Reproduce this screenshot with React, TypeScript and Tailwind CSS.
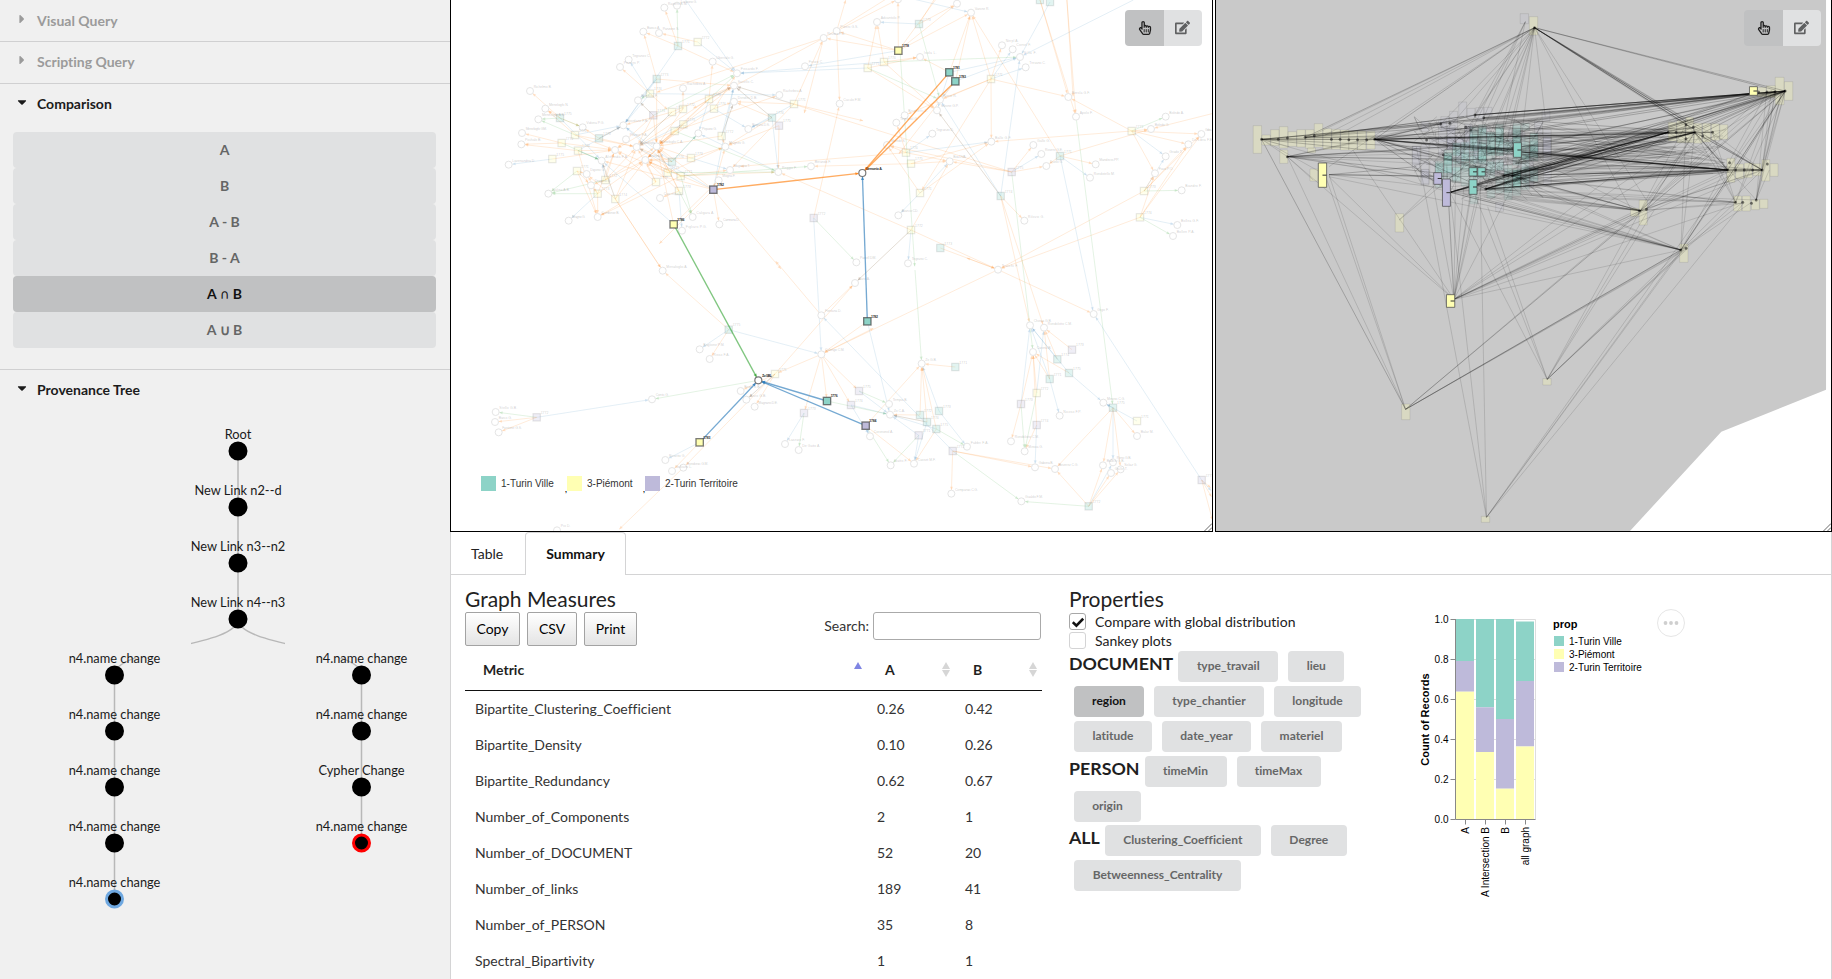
import React from "react";
import { FaEdit, FaRegHandPointer, FaCaretDown, FaCaretRight } from "react-icons/fa";

type Pt = [number, number];
type Mark = [number, number, string];
type Fan = [Pt, number[]];

const TEAL = "#8dd3c7";
const YELLOW = "#ffffb3";
const PURPLE = "#bebada";
const FILL: Record<string, string> = { t: TEAL, y: YELLOW, p: PURPLE };

/* ---------- node-link diagram data ---------- */

const people: Mark[] = [
  [643, 23, "Rapetti B.M."], [681, 17, "Lanzano G."], [580, 95, "Banco A."], [627, 99, "Panzone S."],
  [536, 179, "Tegranzo C."], [510, 201, "Pezzini P."], [240, 273, "Richelmo B."], [286, 326, "Menelogfo N."],
  [265, 358, "Menelogfo A.S."], [216, 399, "Menelogfo GM."], [214, 433, "Pochalo B."], [176, 494, "Lavenandria D."],
  [295, 581, "Galina A.B."], [356, 662, "Magno G."], [443, 651, "Cambinse B."], [423, 556, "Dragano G."],
  [410, 522, "Digono G."], [564, 301, "Bertola F."], [788, 185, "Ubertalo G."], [699, 265, "Rachebira A."],
  [861, 220, "Fissardo F."], [852, 257, "Savello C."], [852, 305, "Dondisi D.B."], [1065, 199, "Fetizo C."],
  [988, 285, "Rachebira A."], [1169, 311, "Cuculo F.M."], [1121, 114, "Rovero P.S."], [895, 387, "Ragana D.S."],
  [745, 400, "Pepano G."], [826, 440, "Magnini G."], [840, 510, "Magnano T."], [985, 516, "Reggio F."],
  [1083, 499, "Berando F."], [806, 541, "Mogna F."], [630, 594, "Caprifina D."], [728, 651, "Caligara A."],
  [808, 673, "Camnona D."], [696, 692, "Figliaro P.G."], [638, 812, "Menafoglio A."], [398, 382, "Vidona P.G."],
  [520, 376, "Giordano F.B."], [560, 441, "Menelogfo"], [620, 439, "Menelogfo C.A."], [586, 480, "Aranzo B."],
  [495, 450, ""], [455, 482, "Alitronda F.A."], [528, 418, "Pozzio F.A."], [1344, -2, ""], [1281, 66, "Advantolo P."],
  [1521, 11, ""], [1563, 38, "Varone R."], [1410, 171, "Isola L."], [1656, 136, "Nerpl A."], [1688, 148, "Cornel F."],
  [1710, 171, "Villa F."], [1727, 202, "Trevano C."], [1470, 299, "Cerio R."], [1461, 331, "Sarone G.P."],
  [1364, 346, "Brighetti L."], [1339, 368, "Tegranol G."], [1447, 401, "Tegranzo D."], [1311, 435, "Moredo S."],
  [1624, 425, "Ballo G.F."], [1499, 484, "Boa DVA."], [1750, 435, "Gallo G."], [1774, 462, "Rovero G.E."],
  [1789, 498, "Duelo G."], [1937, 493, "Mandross PP."], [1920, 533, "Rondotello M."], [1345, 646, "Bianco CD."],
  [1219, 787, "Panell DM."], [1374, 790, "Tegrano C."], [1723, 662, "Rilovio G."], [1644, 809, "Trucchi F."],
  [1855, 291, "Berola G.F."], [1878, 350, "Apolo F."], [2147, 350, "Boledo A."], [2103, 387, "Boledo G."],
  [2147, 469, "Grado T."], [2215, 433, "Da Libra F.E."], [2254, 402, "Goba"], [2115, 520, "Fava P.O."],
  [2195, 571, "Biandro F."], [2182, 675, "Bollea G.F."], [2169, 708, "Bollen P.A."], [1160, 93, "Putero G.S."],
  [749, 1048, "Baglione P.M."], [779, 1077, "Risso F.A."], [606, 1198, "Conto G."], [137, 1236, "Stello G.B."],
  [135, 1266, "Barco G."], [146, 1297, "Fantone G.S."], [872, 1173, "Brida G.B."], [889, 1199, "Arvio G.B."],
  [914, 1220, "Magnano D.E."], [1114, 946, "Fontana D."], [1114, 1063, "Colongo C.M."], [1005, 1332, "Lazzaro F."],
  [1046, 1350, "De Gatto A."], [646, 1380, "Rosetto G."], [666, 1413, "Galvano L."], [700, 1403, "Bondonio G.M."],
  [321, 1591, "Pio D."], [1215, 849, "Zaro A."], [1931, 942, "Gigo F."], [1740, 976, "Chiesa G.B."],
  [1782, 983, "Rondolotto C.M."], [1749, 1056, "Carena B."], [1415, 1091, "Zo G.B."], [1317, 1212, "Tempia B."],
  [1320, 1244, "Zo C.A."], [1260, 1309, "Corononol A."], [1322, 1396, "Gatto F."], [1392, 1391, "Casset M.F."],
  [1551, 1340, "Fabbri F.A."], [1504, 1481, "Comparsio C.G."], [1683, 1324, "Rondolotto C.M."], [1724, 1354, "Minoia G."],
  [1829, 1247, "Nicoso F.P."], [1755, 1402, "Gabona B."], [1815, 1407, "Boverez C.G."], [1714, 1504, "Gualdo F.M."],
  [1960, 1208, "Minoso C.G."], [1959, 1396, "Balbis G.B."], [1989, 1387, "Reno G.B."], [1983, 1419, "Gallo T."],
  [2012, 1408, "Solaz G."], [2061, 1308, "Balar M."],
];

const documents: Mark[] = [
  [684, 138, "t"], [743, 126, "y"], [620, 237, "t"], [600, 281, "y"], [330, 354, "t"], [375, 405, "y"],
  [335, 429, "y"], [447, 415, "t"], [384, 452, "y"], [307, 477, "y"], [381, 513, "y"], [466, 540, "y"],
  [443, 581, "y"], [496, 597, "y"], [610, 346, "p"], [666, 336, "y"], [699, 327, "y"], [777, 297, "y"],
  [792, 326, "y"], [700, 373, "y"], [674, 393, "y"], [815, 408, "y"], [723, 474, "y"], [666, 485, "t"],
  [653, 518, "y"], [692, 528, "y"], [618, 546, "y"], [687, 573, "y"], [966, 353, "t"], [987, 377, "p"],
  [1032, 312, "y"], [1091, 654, "p"], [1407, 72, "t"], [1302, 186, "y"], [1253, 204, "y"], [1623, 237, "y"],
  [1770, 0, "t"], [1800, 6, "t"], [1368, 458, "y"], [1383, 491, "y"], [1410, 579, "y"], [1383, 690, "y"],
  [1471, 744, "t"], [1652, 588, "t"], [1685, 516, "p"], [1830, 468, "t"], [2045, 393, "y"], [2082, 573, "y"],
  [2070, 652, "y"], [836, 989, "t"], [975, 1122, "y"], [260, 1252, "p"], [1062, 1239, "p"], [1203, 1215, "p"],
  [1227, 1173, "p"], [1516, 1101, "t"], [1410, 1245, "t"], [1467, 1233, "t"], [1431, 1266, "t"], [1459, 1287, "t"],
  [1406, 1306, "p"], [1508, 1353, "p"], [1866, 1049, "p"], [1822, 1078, "t"], [1857, 1119, "t"], [1799, 1137, "t"],
  [1760, 1179, "y"], [1713, 1212, "p"], [1760, 1275, "p"], [1989, 1223, "t"], [2061, 1263, "y"], [1916, 1519, "t"],
  [2255, 1440, "p"],
];

const selectedDocs: [number, number, string, string][] = [
  [790, 569, "p", "1782"], [671, 673, "y", "1786"], [1345, 152, "y", "1778"], [1498, 217, "t", "1781"],
  [1516, 244, "t", "1783"], [1131, 1203, "t", "1776"], [749, 1327, "y", "1783"], [1252, 964, "t", "1782"],
  [1247, 1277, "p", "1784"],
];

/* Each entry is a document followed by the flat x,y list of its people. */
const orange: Fan[] = [
  [[684, 138], [580, 95, 643, 23, 861, 220]], [[743, 126], [627, 99]], [[620, 237], [580, 95, 852, 257, 620, 439]],
  [[600, 281], [510, 201, 660, 336]], [[330, 354], [240, 273, 286, 326, 398, 382]], [[375, 405], [286, 326, 495, 450, 560, 441]],
  [[335, 429], [216, 399, 214, 433, 495, 450]], [[447, 415], [520, 376, 560, 441, 398, 382]],
  [[384, 452], [495, 450, 214, 433, 443, 651]], [[307, 477], [495, 450]], [[381, 513], [423, 556, 410, 522, 443, 651]],
  [[466, 540], [560, 441, 423, 556, 620, 439, 495, 450, 586, 480]], [[443, 581], [443, 651, 423, 556, 586, 480, 495, 450, 410, 522]],
  [[496, 597], [560, 441, 586, 480, 455, 482, 638, 812, 410, 522]], [[610, 346], [564, 301, 620, 439, 495, 450, 560, 441]],
  [[666, 336], [560, 441, 852, 257, 520, 376]], [[699, 327], [699, 265, 620, 439, 495, 450]],
  [[777, 297], [620, 439, 586, 480, 788, 185, 852, 257, 560, 441]], [[792, 326], [620, 439, 852, 305, 861, 220]],
  [[700, 373], [620, 439, 586, 480, 852, 257]], [[674, 393], [620, 439, 586, 480, 560, 441, 988, 285]],
  [[815, 408], [826, 440, 852, 305, 620, 439]], [[723, 474], [620, 439, 826, 440, 586, 480]],
  [[666, 485], [586, 480, 620, 439, 560, 441]], [[653, 518], [586, 480, 620, 439, 495, 450, 826, 440]],
  [[692, 528], [586, 480, 560, 441, 840, 510, 985, 516, 443, 651]], [[618, 546], [560, 441, 586, 480, 443, 651, 495, 450]],
  [[687, 573], [586, 480, 620, 439, 630, 594, 620, 439]], [[790, 569], [586, 480, 620, 439, 808, 673, 620, 739, 455, 482, 1000, 815, 826, 440]],
  [[966, 353], [826, 440, 852, 257, 852, 305]], [[987, 377], [826, 440, 985, 516]],
  [[1032, 312], [852, 305, 1121, 114, 840, 510, 1250, 365]], [[1091, 654], [1169, 311]], [[671, 673], [620, 439, 806, 541]],
  [[496, 597], [638, 812]], [[836, 989], [638, 812, 779, 1077]],
  [[1345, 152], [1344, -2, 1121, 114, 1521, 11, 1563, 38, 1160, 93, 1500, -60]], [[1407, 72], [1521, 11, 1470, -30]],
  [[1302, 186], [1281, 66, 1410, 171, 1461, 331]], [[1253, 204], [1281, 66, 1410, 171, 1461, 331]],
  [[1623, 237], [1563, 38, 1656, 136, 1624, 425, 1470, 299, 1855, 291, 1410, 579, 1364, 346]],
  [[1498, 217], [1563, 38, 1410, 171]], [[1516, 244], [1563, 38, 1340, 470]],
  [[1368, 458], [1339, 368, 1499, 484, 1311, 435, 860, 500]], [[1383, 491], [1499, 484, 1624, 425, 1083, 499]],
  [[1410, 579], [1311, 435, 1624, 425]], [[1383, 690], [1499, 484, 1215, 849, 985, 516, 1644, 809]],
  [[1471, 744], [1644, 809]], [[1652, 588], [1723, 662, 1461, 331, 1740, 976, 1782, 983]],
  [[1685, 516], [1750, 435, 1789, 498, 1499, 484, 1311, 435, 852, 257]],
  [[1830, 468], [1937, 493, 1789, 498, 1563, 38, 2103, 387]], [[1770, 0], [1878, 350, 1855, 291]], [[1850, -10], [1878, 350, 1870, 300]],
  [[2045, 393], [2103, 387, 2215, 433, 1855, 291, 1624, 425, 2115, 520, 2254, 402]],
  [[2082, 573], [2215, 433, 2254, 402, 1644, 809, 2115, 520]], [[2070, 652], [2215, 433, 2254, 402, 1644, 809, 2115, 520]],
  [[2290, 340], [2103, 387]], [[1121, 114], [1060, 350, 1400, -60, 610, 280, 720, 330]], [[1160, 93], [1190, -10, 1169, 311, 1344, -2]],
  [[1252, 964], [1114, 1063]], [[1644, 809], [1540, 770, 1931, 942, 1114, 1063]], [[1114, 1063], [1062, 1239, 1131, 1203, 1203, 1215, 1227, 1173, 975, 1122, 1280, 980]],
  [[1114, 946], [970, 775, 1215, 849]], [[975, 1122], [872, 1173, 914, 1220, 889, 1199, 1215, 849]],
  [[260, 1252], [135, 1266, 146, 1297]], [[749, 1327], [666, 1413]], [[975, 1122], [700, 1403]], [[700, 1403], [500, 1595]],
  [[1516, 1101], [1415, 1091]], [[1247, 1277], [1392, 1391, 1415, 1091]],
  [[1410, 1245], [1320, 1244, 1415, 1091]], [[1431, 1266], [1415, 1091, 1320, 1244]], [[1459, 1287], [1392, 1391, 1415, 1091]],
  [[1508, 1353], [1504, 1481, 1755, 1402, 1815, 1407]], [[1866, 1049], [1782, 983]], [[1822, 1078], [1782, 983]],
  [[1799, 1137], [1782, 983, 1749, 1056]], [[1857, 1119], [1749, 1056]], [[1760, 1179], [1749, 1056]],
  [[1713, 1212], [1749, 1056, 1683, 1324]], [[1760, 1275], [1749, 1056, 1724, 1354]],
  [[1989, 1223], [1815, 1407, 1959, 1396, 2012, 1408, 2061, 1308]], [[1916, 1519], [1815, 1407, 1959, 1396, 1983, 1419, 2012, 1408]],
  [[2255, 1440], [2290, 1500, 2290, 1570, 2290, 1470]],
];

const blue: Fan[] = [
  [[684, 138], [520, 376]], [[743, 126], [861, 220]], [[700, -10], [861, 220]], [[600, 281], [536, 179, 520, 376, 988, 285]],
  [[620, 237], [520, 376, 564, 301]], [[330, 354], [455, 482]], [[375, 405], [520, 376]], [[447, 415], [520, 376]],
  [[384, 452], [520, 376, 455, 482]], [[307, 477], [176, 494]], [[466, 540], [455, 482]], [[443, 581], [356, 662]],
  [[496, 597], [455, 482]], [[610, 346], [564, 301]], [[666, 336], [560, 441]], [[777, 297], [852, 257, 745, 400]],
  [[792, 326], [560, 441, 895, 387]], [[815, 408], [852, 257, 852, 305]], [[966, 353], [895, 387, 985, 516, 852, 257]],
  [[1032, 312], [895, 387, 852, 257]], [[666, 485], [745, 400, 520, 376]], [[723, 474], [840, 510]], [[692, 528], [520, 376]],
  [[790, 569], [852, 257, 560, 441]], [[687, 573], [696, 692]], [[671, 673], [455, 482]], [[985, 516], [745, 400]],
  [[1345, 152], [1065, 199]], [[1302, 186], [861, 220]], [[1253, 204], [861, 220]], [[1407, 72], [1281, 66]], [[1360, -10], [1563, 38]],
  [[1498, 217], [1710, 171, 1461, 331]], [[1516, 244], [1710, 171, 1470, 299]], [[1623, 237], [1727, 202, 1688, 148]],
  [[1800, 6], [1710, 171]], [[2050, 0], [1710, 171]], [[1368, 458], [1447, 401, 1624, 425]], [[1410, 579], [1345, 646, 1499, 484]],
  [[1383, 690], [1374, 790, 1215, 849]], [[1652, 588], [1461, 331, 1710, 171, 1470, 299]], [[1685, 516], [1774, 462]],
  [[1830, 468], [1920, 533, 1931, 942]], [[2045, 393], [2147, 469]], [[2082, 573], [2147, 469]], [[2070, 652], [2182, 675]],
  [[1091, 654], [1114, 1063]], [[836, 989], [749, 1048, 1114, 1063]], [[260, 1252], [606, 1198]], [[1062, 1239], [1005, 1332]],
  [[749, 1327], [646, 1380]], [[975, 1122], [889, 1199]], [[1252, 964], [1320, 1244]], [[1508, 1353], [1114, 946]],
  [[1227, 1173], [1320, 1244]], [[1203, 1215], [1320, 1244, 1260, 1309]], [[1247, 1277], [1260, 1309]],
  [[1431, 1266], [1320, 1244]], [[1459, 1287], [1320, 1244]], [[1406, 1306], [1320, 1244, 1392, 1391]],
  [[1467, 1233], [1415, 1091, 1551, 1340]], [[1431, 1266], [1392, 1391]], [[1822, 1078], [1740, 976]], [[1857, 1119], [1740, 976, 1960, 1208]],
  [[1799, 1137], [1740, 976, 1829, 1247]], [[1713, 1212], [1740, 976]], [[1760, 1179], [1782, 983]], [[1760, 1275], [1755, 1402]],
  [[1989, 1223], [1989, 1387, 1960, 1208]], [[2061, 1263], [1960, 1208]], [[1916, 1519], [1989, 1387]], [[2255, 1440], [1931, 942, 2290, 1480]],
];

const green: Fan[] = [
  [[684, 138], [681, 17]], [[777, 297], [861, 220]], [[610, 346], [861, 220]], [[330, 354], [265, 358, 398, 382]], [[375, 405], [265, 358]],
  [[384, 452], [455, 482]], [[335, 429], [455, 482]], [[381, 513], [295, 581]], [[466, 540], [295, 581]], [[443, 581], [295, 581]],
  [[666, 485], [745, 400]], [[692, 528], [728, 651, 1083, 499]], [[687, 573], [728, 651]], [[653, 518], [985, 516]], [[674, 393], [985, 516]],
  [[600, 281], [564, 301]], [[1302, 186], [1710, 171]], [[1253, 204], [1470, 299]], [[1407, 72], [1470, 299]], [[1350, 152], [1395, 810]],
  [[1395, 810], [1415, 1091]], [[1878, 350], [1989, 1223]], [[1685, 516], [1749, 1056]], [[2045, 393], [2147, 350]], [[2082, 573], [2195, 571]],
  [[2070, 652], [2169, 708]], [[1091, 654], [1219, 787]], [[925, 1141], [606, 1198]], [[260, 1252], [137, 1236]], [[1062, 1239], [1046, 1350]],
  [[1131, 1203], [1320, 1244]], [[1227, 1173], [1317, 1212]], [[1247, 1277], [1322, 1396]], [[1406, 1306], [1322, 1396]],
  [[1459, 1287], [1551, 1340]], [[1508, 1353], [1714, 1504]], [[1916, 1519], [1714, 1504]], [[1713, 1212], [1724, 1354]], [[1760, 1179], [1724, 1354]],
];

function shorten(a: Pt, b: Pt, by: number): Pt {
  const d = Math.hypot(b[0] - a[0], b[1] - a[1]) || 1;
  return [b[0] - ((b[0] - a[0]) * by) / d, b[1] - ((b[1] - a[1]) * by) / d];
}

function arrow(a: Pt, tip: Pt): string {
  const angle = Math.atan2(tip[1] - a[1], tip[0] - a[0]);
  const side = (s: number) =>
    `${(tip[0] - 11 * Math.cos(angle + s)).toFixed(1)},${(tip[1] - 11 * Math.sin(angle + s)).toFixed(1)}`;
  return `${tip[0].toFixed(1)},${tip[1].toFixed(1)} ${side(0.45)} ${side(-0.45)}`;
}

function Links({ fans, color, opacity = 0.13, width = 3 }: { fans: Fan[]; color: string; opacity?: number; width?: number }) {
  return (
    <g stroke={color} fill={color} strokeWidth={width}>
      {fans.flatMap(([from, list], i) => {
        const out: React.ReactNode[] = [];
        for (let k = 0; k < list.length; k += 2) {
          const tip = shorten(from, [list[k], list[k + 1]], 11);
          out.push(
            <g key={`${i}-${k}`}>
              <line x1={from[0]} y1={from[1]} x2={tip[0]} y2={tip[1]} strokeOpacity={opacity} />
              <polygon points={arrow(from, tip)} stroke="none" fillOpacity={opacity * 1.2} />
            </g>
          );
        }
        return out;
      })}
    </g>
  );
}

function NodeLink() {
  return (
    <svg className="block h-full w-full font-['Liberation_Sans',sans-serif]" viewBox="3 0 2283 1593">
      <Links fans={orange} color="#ff7f0e" opacity={0.15} />
      <Links fans={blue} color="#3182bd" />
      <Links fans={green} color="#2ca02c" />
      <g fill="#fff" stroke="#e5e5e5" strokeWidth={3}>
        {people.map(([x, y], i) => (
          <circle key={i} cx={x} cy={y} r={10.5} />
        ))}
      </g>
      <g strokeWidth={3.5}>
        {documents.map(([x, y, c], i) => (
          <g key={i}>
            <rect x={x - 11} y={y - 11} width={22} height={22} fill={FILL[c]} fillOpacity={0.25} stroke="#444" strokeOpacity={0.13} />
          </g>
        ))}
      </g>
      <g fill="#777" fillOpacity={0.38} fontSize={10.5}>
        {people.map(([x, y, t], i) =>
          t ? <text key={i} x={x + 11} y={y - 9} textLength={t.length * 4.9}>{t}</text> : null
        )}
        {documents.map(([x, y], i) =>
          y > 20 ? <text key={i} x={x + 12} y={y - 10}>{`17${71 + (i % 5)}`}</text> : null
        )}
      </g>
      <Links fans={[[[1498, 217], [1237, 519]], [[1516, 244], [1237, 519]], [[790, 569], [1237, 519]]]} color="#ff7f0e" opacity={0.65} width={4} />
      <Links fans={[[[1252, 964], [1237, 519]], [[1131, 1203], [925, 1141]], [[1247, 1277], [925, 1141]], [[749, 1327], [925, 1141]]]} color="#2b7bba" opacity={0.65} width={4} />
      <Links fans={[[[671, 673], [925, 1141]]]} color="#2ca02c" opacity={0.6} width={4} />
      {[[1237, 519], [925, 1141]].map(([x, y]) => (
        <circle key={x} cx={x} cy={y} r={10.5} fill="#fff" stroke="#777" strokeWidth={3.5} />
      ))}
      {selectedDocs.map(([x, y, c, label]) => (
        <g key={`${x}-${y}`}>
          <rect x={x - 11} y={y - 11} width={22} height={22} fill={FILL[c]} stroke="#444" strokeOpacity={0.7} strokeWidth={4} />
          <text x={x + 11} y={y - 11} fontSize={10.5} fontWeight={700} fill="#333" textLength={21}>{label}</text>
        </g>
      ))}
      <text x={1247} y={510} fontSize={10.5} fontWeight={700} fill="#333" textLength={50}>Gemonio A.</text>
      <text x={936} y={1130} fontSize={10.5} fontWeight={700} fill="#333" textLength={30}>Zo GBL</text>
    </svg>
  );
}

/* ---------- geographic view data ---------- */

function random(seed: number) {
  let s = seed;
  return () => {
    s = (s * 16807) % 2147483647;
    return s / 2147483647;
  };
}

/* Boxes: x, y, width, height, colour key. */
const faintBoxes: [number, number, number, number, string][] = [
  [782, 41, 21, 30, "p"], [805, 50, 21, 55, "y"], [1425, 232, 22, 82, "y"], [1448, 245, 21, 56, "y"], [1380, 262, 22, 28, "y"],
  [1403, 257, 22, 35, "y"], [109, 377, 21, 83, "y"], [131, 405, 21, 30, "y"], [153, 389, 21, 48, "y"], [175, 380, 21, 64, "y"],
  [197, 395, 21, 44, "y"], [219, 389, 21, 52, "y"], [241, 389, 21, 56, "y"], [263, 371, 21, 70, "y"], [285, 386, 21, 62, "y"],
  [307, 388, 21, 60, "y"], [329, 390, 21, 60, "y"], [350, 393, 21, 57, "y"], [372, 393, 21, 57, "y"], [395, 394, 21, 53, "y"],
  [176, 450, 20, 40, "y"], [246, 444, 20, 14, "y"], [252, 507, 20, 36, "y"], [467, 641, 21, 55, "y"], [1060, 625, 20, 24, "y"],
  [1082, 600, 20, 75, "y"], [1184, 732, 21, 55, "y"], [1155, 367, 21, 56, "y"], [1177, 362, 21, 66, "y"], [1199, 352, 20, 76, "y"],
  [1220, 370, 20, 60, "y"], [1242, 370, 20, 56, "y"], [1264, 371, 20, 50, "y"], [1285, 374, 20, 44, "y"], [1303, 475, 20, 72, "y"],
  [1325, 492, 20, 44, "y"], [1347, 489, 20, 44, "y"], [1369, 491, 20, 36, "y"], [1391, 479, 20, 64, "y"], [1412, 491, 20, 38, "y"],
  [1320, 588, 20, 45, "y"], [1342, 588, 20, 45, "y"], [1365, 599, 20, 30, "y"], [1386, 598, 20, 27, "y"], [483, 1212, 21, 47, "y"],
  [839, 1136, 21, 19, "y"], [684, 1549, 21, 18, "y"], [627, 306, 20, 46, "p"], [604, 334, 20, 60, "p"], [582, 350, 20, 44, "p"],
  [648, 325, 20, 30, "p"], [670, 323, 20, 40, "p"], [691, 322, 20, 26, "p"], [837, 332, 20, 32, "p"], [720, 606, 20, 28, "p"],
];

const cloud = (() => {
  const r = random(42);
  const out: [number, number, number, number, string][] = [];
  for (let i = 0; i < 60; i++) {
    out.push([510 + Math.floor(r() * 16) * 22, 360 + r() * 150, 20, 24 + r() * 42, "p"]);
  }
  for (let i = 0; i < 100; i++) {
    const col = Math.floor(r() * 12);
    const top = col < 4 ? 425 : col < 8 ? 340 + r() * 60 : 365;
    out.push([568 + col * 21.7, top + r() * (col < 4 ? 90 : 180), 20, 20 + r() * 36, "t"]);
  }
  return out;
})();

const strongBoxes: [number, number, number, number, string][] = [
  [273, 489, 21, 73, "y"], [1360, 260, 20, 26, "y"], [596, 884, 21, 38, "y"], [564, 518, 20, 35, "p"], [586, 537, 20, 82, "p"],
  [653, 503, 20, 25, "t"], [675, 503, 19, 25, "t"], [765, 428, 20, 44, "t"], [653, 539, 20, 44, "t"],
];

/* Hub followed by its flat x,y targets, grouped by line darkness. */
const ties: [number, Fan[]][] = [
  [0.12, [
    [[818, 83], [290, 405, 330, 400, 260, 405, 300, 500, 582, 372, 604, 380, 668, 345, 640, 400, 700, 420, 760, 400, 745, 440, 775, 520, 845, 350, 1060, 625, 1100, 600, 1190, 370, 1215, 385, 1250, 400, 1290, 420, 605, 577, 660, 560, 695, 567]],
    [[795, 65], [668, 345, 690, 353, 720, 480, 640, 440]],
    [[493, 1228], [195, 470, 290, 524, 300, 524, 1187, 750, 1200, 745, 1190, 755, 1085, 632]],
    [[850, 1138], [605, 577, 660, 560, 700, 620, 1085, 632, 1120, 630, 1187, 750, 1195, 750, 1205, 745, 1325, 607, 1100, 640]],
    [[697, 1552], [520, 440, 605, 577, 680, 480, 1187, 750, 1197, 740, 1310, 520, 1345, 610]],
    [[615, 898], [300, 530, 200, 475, 360, 450, 560, 540, 600, 580, 597, 500, 620, 440, 640, 560, 660, 550, 680, 540, 700, 480, 780, 520, 690, 353, 1085, 632, 1060, 640, 1187, 750, 1310, 515, 1325, 520, 1392, 510, 1343, 607, 1222, 400, 1155, 397, 1450, 273, 1090, 630]],
    [[1187, 750], [605, 577, 695, 567, 680, 580, 660, 560, 300, 530, 740, 527, 762, 527, 640, 600, 690, 590, 1325, 510, 1392, 510, 1365, 607, 1343, 607, 1450, 273, 1403, 280, 1222, 397, 1200, 372]],
    [[1085, 632], [195, 470, 300, 524, 415, 418, 605, 577, 695, 567, 740, 527, 762, 527, 660, 560, 600, 540, 680, 590, 770, 450, 750, 590, 1325, 607, 1343, 610, 1305, 510, 1392, 510, 1370, 520, 1222, 397, 1240, 400, 1200, 372, 1450, 273, 1425, 275, 1403, 275]],
    [[477, 660], [580, 540, 640, 500]],
    [[195, 470], [415, 418, 600, 460, 690, 500, 740, 480, 260, 540, 582, 372, 620, 440, 668, 345, 700, 560]],
    [[130, 418], [200, 440, 290, 524, 605, 577, 195, 470]],
    [[1325, 607], [605, 577, 695, 567, 740, 527, 762, 527, 750, 590, 1222, 397, 1240, 400, 1267, 397, 1450, 273, 1425, 275]],
    [[1377, 600], [1392, 510, 1410, 510, 1450, 273, 1425, 275, 1403, 275, 1440, 280, 1222, 397, 695, 567]],
    [[1392, 510], [1450, 273, 1440, 280, 1425, 275, 1415, 270, 1222, 397, 1240, 400, 1250, 410, 1267, 397, 1200, 372]],
    [[1305, 510], [1450, 273, 1425, 275, 1200, 372, 1222, 397, 1240, 400, 1155, 397, 1177, 400]],
  ]],
  [0.21, [
    [[1450, 273], [668, 345, 690, 353, 650, 380, 700, 370, 605, 577, 695, 567, 760, 400, 745, 450, 740, 527, 762, 527, 770, 490, 1155, 397, 1200, 372, 1222, 397, 1190, 395, 1185, 410, 1240, 400, 1187, 750, 1100, 628, 1325, 510]],
    [[1370, 280], [582, 372, 668, 345, 610, 400, 690, 353, 740, 400, 415, 418, 130, 418, 695, 567, 605, 577]],
    [[1425, 275], [668, 345, 660, 365, 695, 567, 780, 480, 800, 440, 130, 418]],
    [[415, 418], [1450, 273, 1155, 397, 1190, 400, 1200, 400, 1177, 410, 605, 577, 740, 527, 582, 372, 668, 345, 695, 567, 1085, 632, 765, 450, 700, 495, 600, 440]],
    [[240, 412], [582, 372, 600, 380, 640, 350, 668, 345, 700, 410]],
    [[130, 418], [582, 372, 700, 450, 560, 470, 640, 400]],
    [[195, 470], [520, 450, 600, 440, 700, 480, 580, 520]],
    [[300, 524], [520, 500, 600, 530, 700, 530]],
    [[1155, 397], [605, 577, 660, 560, 695, 567, 740, 527, 762, 527, 700, 450, 750, 400, 640, 380, 745, 480, 770, 490]],
    [[1222, 397], [605, 577, 695, 567, 740, 527, 762, 527, 790, 560, 1100, 628, 1305, 510, 1392, 510, 690, 353]],
    [[1305, 510], [415, 418, 605, 577, 695, 567, 660, 560, 740, 527, 762, 527, 770, 450, 785, 455, 700, 460, 600, 430, 690, 540]],
    [[1392, 510], [740, 527, 695, 567, 770, 490, 600, 430]],
    [[818, 83], [415, 418, 240, 412, 1200, 372, 1205, 362, 1222, 390, 1450, 273, 1425, 270]],
    [[1187, 750], [605, 577, 640, 582]], [[493, 1228], [130, 418, 1187, 750, 1090, 632]],
  ]],
  [0.38, [
    [[415, 418], [130, 418, 1222, 397, 1305, 510, 770, 450]], [[605, 577], [1155, 397, 740, 527, 660, 560]],
    [[695, 567], [1305, 512, 1222, 397, 1155, 397]], [[668, 345], [1370, 280]],
    [[1305, 510], [1392, 510, 780, 455]], [[1155, 397], [1267, 397, 740, 527]], [[1370, 280], [1450, 273]],
    [[740, 527], [1222, 397]], [[818, 83], [1200, 365]],
  ]],
];

const smudges: number[] = [
  130, 418, 172, 418, 195, 414, 240, 412, 263, 407, 306, 418, 328, 418, 350, 419, 372, 419, 395, 419, 415, 418, 195, 470, 668, 345,
  690, 353, 582, 372, 605, 370, 605, 577, 695, 567, 740, 527, 762, 527, 1155, 397, 1175, 397, 1200, 374, 1218, 382, 1222, 397,
  1242, 408, 1267, 397, 1200, 416, 1305, 510, 1325, 510, 1347, 510, 1368, 510, 1392, 510, 1310, 488, 1405, 492, 1325, 607, 1343, 607,
  1365, 610, 1377, 600, 1083, 632, 1100, 628, 1187, 750, 1200, 745, 1383, 276, 1404, 276, 1425, 275, 1450, 273, 645, 382, 657, 390,
  546, 420, 588, 464, 818, 83,
];

const mesh = (() => {
  const r = random(7);
  const out: number[][] = [];
  for (let i = 0; i < 170; i++) {
    const x = 530 + r() * 290;
    const y = 370 + r() * 190;
    out.push([x, y, Math.min(840, Math.max(515, x + (r() - 0.5) * 170)), Math.min(600, Math.max(350, y + (r() - 0.5) * 130))]);
  }
  for (let i = 0; i < 55; i++) {
    out.push([560 + r() * 260, 360 + r() * 220, 1150 + r() * 160, 380 + r() * 150]);
  }
  return out;
})();

const BOX_OPACITY: Record<string, number> = { y: 0.3, p: 0.15, t: 0.17 };

function GeoMap() {
  return (
    <svg className="block h-full w-full" viewBox="15.1 0 1550.4 1593" preserveAspectRatio="none">
      <polygon points="15,0 1553,0 1553,1169 1289,1295 1058,1594 15,1594" fill="#c9c9c9" />
      {[...faintBoxes, ...cloud].map(([x, y, w, h, c], i) => (
        <rect key={i} x={x} y={y} width={w} height={h} fill={FILL[c]} fillOpacity={BOX_OPACITY[c]} stroke="#444" strokeOpacity={0.11} vectorEffect="non-scaling-stroke" />
      ))}
      <g stroke="#000" strokeOpacity={0.13}>
        {mesh.map(([a, b, c, d], i) => (
          <line key={i} x1={a} y1={b} x2={c} y2={d} vectorEffect="non-scaling-stroke" />
        ))}
      </g>
      {ties.map(([opacity, fans]) => (
        <g key={opacity} stroke="#000" strokeOpacity={opacity}>
          {fans.flatMap(([[x, y], list], i) => {
            const out: React.ReactNode[] = [];
            for (let k = 0; k < list.length; k += 2) {
              out.push(<line key={`${i}-${k}`} x1={x} y1={y} x2={list[k]} y2={list[k + 1]} vectorEffect="non-scaling-stroke" />);
            }
            return out;
          })}
        </g>
      ))}
      {smudges.map((x, i) =>
        i % 2 === 0 ? <ellipse key={i} cx={x} cy={smudges[i + 1]} rx={3.5} ry={4.5} fill="#000" fillOpacity={0.5} /> : null
      )}
      {strongBoxes.map(([x, y, w, h, c], i) => (
        <g key={i}>
          <rect x={x} y={y} width={w} height={h} fill={FILL[c]} stroke="#555" strokeOpacity={0.8} vectorEffect="non-scaling-stroke" />
          <line x1={x + w / 2} y1={y + h / 2} x2={x + w} y2={y + h / 2} stroke="#333" vectorEffect="non-scaling-stroke" />
        </g>
      ))}
    </svg>
  );
}

function Toolbar() {
  return (
    <div className="absolute top-[10px] right-[10px] flex h-9 w-[77px] overflow-hidden rounded">
      <button className="flex w-[39px] items-center justify-center bg-[#c0c1c2] pb-px text-[#1f1f1f]">
        <FaRegHandPointer size={14} />
      </button>
      <button className="flex flex-1 items-center justify-center bg-[#e0e1e2] pr-px pb-px text-[#5f6061]">
        <FaEdit size={15} />
      </button>
    </div>
  );
}

function ResizeGrip() {
  return (
    <svg className="absolute right-0 bottom-0 h-2 w-2" viewBox="0 0 8 8" stroke="#444" strokeWidth={0.8}>
      <path d="M0.5 8 L8 0.5 M4.5 8 L8 4.5" />
    </svg>
  );
}

/* ---------- sidebar ---------- */

function Title({ open, first, children }: { open?: boolean; first?: boolean; children: React.ReactNode }) {
  return (
    <div className={`flex h-[41px] items-center pl-[15px] text-sm font-bold ${first ? "" : "pb-[2px]"} ${open ? "text-[#1b1b1b]" : "text-[#9b9b9b]"}`}>
      <span className="mb-[3px] w-[22px]">{open ? <FaCaretDown size={14} /> : <FaCaretRight size={14} />}</span>
      <span>{children}</span>
    </div>
  );
}

const treeNodes: [number, number, string, string?][] = [
  [238, 451, "Root"], [238, 507, "New Link n2--d"], [238, 563, "New Link n3--n2"], [238, 619, "New Link n4--n3"],
  [114.5, 675, "n4.name change"], [114.5, 731, "n4.name change"], [114.5, 787, "n4.name change"], [114.5, 843, "n4.name change"],
  [114.5, 899, "n4.name change", "#6fa8e0"], [361.5, 675, "n4.name change"], [361.5, 731, "n4.name change"],
  [361.5, 787, "Cypher Change"], [361.5, 843, "n4.name change", "#ff0000"],
];

function ProvenanceTree() {
  return (
    <svg className="block h-[568px] w-[450px]" viewBox="0 411 450 568">
      <defs>
        <clipPath id="branch">
          <rect x="191" y="411" width="94" height="240" />
          <rect x="0" y="658" width="450" height="321" />
        </clipPath>
      </defs>
      <g fill="none" stroke="#b8b8b8" strokeWidth={1.5}>
        <path d="M238 451V619M114.5 675V899M361.5 675V843" />
        <path clipPath="url(#branch)" d="M238 619C238 647 114.5 647 114.5 675M238 619C238 647 361.5 647 361.5 675" />
      </g>
      {treeNodes.map(([x, y, label, ring]) => (
        <g key={`${x}-${y}`}>
          <circle cx={x} cy={y} r={8} fill="#000" stroke={ring ?? "#000"} strokeWidth={3} />
          <text x={x} y={y - 12} textAnchor="middle" fontSize={12.8} fill="#1a1a1a">{label}</text>
        </g>
      ))}
    </svg>
  );
}

function Sidebar() {
  const ops = ["A", "B", "A - B", "B - A", "A ∩ B", "A ∪ B"];
  return (
    <aside className="h-full w-[450px] shrink-0 bg-[#f0f0f0]">
      <div className="border-b border-[#d0d0d1]"><Title first>Visual Query</Title></div>
      <div className="border-b border-[#d0d0d1]"><Title>Scripting Query</Title></div>
      <div className="border-b border-[#d0d0d1] pb-[21px]">
        <Title open>Comparison</Title>
        <div className="mt-[7px] mr-[14px] ml-[13px] flex flex-col">
          {ops.map((op) => (
            <button key={op} className={`h-9 rounded text-sm leading-none font-bold ${op === "A ∩ B" ? "bg-[#c0c1c2] text-[#121212]" : "bg-[#e0e1e2] text-[#656666]"}`}>
              {op === "A ∩ B" ? <>A <span className="font-['DejaVu_Sans',sans-serif] text-[13px] leading-none font-normal">∩</span> B</> : op}
            </button>
          ))}
        </div>
      </div>
      <Title open>Provenance Tree</Title>
      <ProvenanceTree />
    </aside>
  );
}

/* ---------- summary pane ---------- */

const metrics: [string, string, string][] = [
  ["Bipartite_Clustering_Coefficient", "0.26", "0.42"], ["Bipartite_Density", "0.10", "0.26"], ["Bipartite_Redundancy", "0.62", "0.67"],
  ["Number_of_Components", "2", "1"], ["Number_of_DOCUMENT", "52", "20"], ["Number_of_links", "189", "41"],
  ["Number_of_PERSON", "35", "8"], ["Spectral_Bipartivity", "1", "1"],
];

function SortIcon({ active }: { active?: boolean }) {
  return (
    <svg className="h-[15px] w-2" viewBox="0 0 8 15">
      <path d="M0 7L4 0L8 7Z" fill={active ? "#7f85e3" : "#d6d6d6"} />
      {!active && <path d="M0 8L4 15L8 8Z" fill="#d6d6d6" />}
    </svg>
  );
}

function Measures() {
  return (
    <section className="w-[577px] shrink-0">
      <h2 className="h-[26px] text-[21px] leading-[26px]">Graph Measures</h2>
      <div className="flex h-[49px] justify-between">
        <div className="flex gap-[7px]">
          {[["Copy", "w-[55px]"], ["CSV", "w-[50px]"], ["Print", "w-[53px]"]].map(([label, w]) => (
            <button key={label} className={`${w} h-[34px] rounded-xs border border-[#a3a3a3] bg-linear-to-b from-white to-[#e4e4e4] pb-[2px] text-[14px] text-black`}>
              {label}
            </button>
          ))}
        </div>
        <label className="flex h-7 items-center gap-1 pr-px text-[14px] text-[#333]">
          <span className="pb-[2px]">Search:</span>
          <span className="h-7 w-[168px] rounded-[3px] border border-[#aaa] bg-white" />
        </label>
      </div>
      <div className="grid h-[30px] grid-cols-[404px_88px_85px] border-b border-[#111] text-[14px] font-bold text-[#1f1f1f]">
        {["Metric", "A", "B"].map((h, i) => (
          <div key={h} className={`flex h-4 items-center justify-between pt-px ${i === 0 ? "pr-[7px] pl-[18px]" : i === 1 ? "pr-[7px] pl-4" : "pr-[5px] pl-4"}`}>
            {h}
            <SortIcon active={i === 0} />
          </div>
        ))}
      </div>
      {metrics.map(([name, a, b]) => (
        <div key={name} className="grid h-9 grid-cols-[404px_88px_85px] items-center pb-[2px] text-[14px] text-[#333]">
          <div className="pl-[10px]">{name}</div>
          <div className="pl-2">{a}</div>
          <div className="pl-2">{b}</div>
        </div>
      ))}
    </section>
  );
}

const propertyRows: { title?: string; items: [string, string][] }[] = [
  { title: "DOCUMENT", items: [["type_travail", "w-[100px]"], ["lieu", "w-14"]] },
  { items: [["region", "w-[70px]"], ["type_chantier", "w-[110px]"], ["longitude", "w-[87px]"]] },
  { items: [["latitude", "w-[78px]"], ["date_year", "w-[89px]"], ["materiel", "w-[81px]"]] },
  { title: "PERSON", items: [["timeMin", "w-[82px]"], ["timeMax", "w-[84px]"]] },
  { items: [["origin", "w-[67px]"]] },
  { title: "ALL", items: [["Clustering_Coefficient", "w-[156px]"], ["Degree", "w-[76px]"]] },
  { items: [["Betweenness_Centrality", "w-[167px]"]] },
];

function CheckRow({ checked, children }: { checked?: boolean; children: React.ReactNode }) {
  return (
    <div className="flex h-[19px] items-center gap-[9px] text-sm text-[#222]">
      <span className={`flex h-[17px] w-[17px] items-center justify-center rounded-[3px] border bg-white ${checked ? "border-[#a8a8a8]" : "border-[#d4d4d5]"}`}>
        {checked && (
          <svg className="h-3 w-3" viewBox="0 0 12 12">
            <path d="M0.8 6.2L4.4 9.6L11.2 2.6" fill="none" stroke="#111" strokeWidth={2.6} />
          </svg>
        )}
      </span>
      <span>{children}</span>
    </div>
  );
}

function Properties() {
  return (
    <section className="w-[340px] shrink-0">
      <h2 className="h-[26px] text-[21px] leading-[26px]">Properties</h2>
      <CheckRow checked>Compare with global distribution</CheckRow>
      <CheckRow>Sankey plots</CheckRow>
      <div className="pt-px">
        {propertyRows.map(({ title, items }, i) => (
          <div key={i} className="flex h-[34.9px]">
            {title && <h3 className="h-[25px] text-[17.8px] leading-6 font-bold text-[#1f1f1f]">{title}</h3>}
            {items.map(([label, w]) => (
              <button key={label} className={`${w} mx-[5px] h-[31px] rounded pb-px text-xs font-bold ${label === "region" ? "bg-[#c0c1c2] text-[#121212]" : "bg-[#e0e1e2] text-[#666767]"}`}>
                {label}
              </button>
            ))}
          </div>
        ))}
      </div>
    </section>
  );
}

/* Top of the stack, then the lower edges of the teal, purple and yellow parts. */
const bars: [string, number, number, number][] = [
  ["A", 0, 42, 72.7], ["A Intersection B", 0, 88.3, 133], ["B", 0, 100, 169.7], ["all graph", 2.5, 62, 127.5],
];

function DistributionChart() {
  return (
    <svg className="block h-[345px] w-[430px] font-['Liberation_Sans',sans-serif]" viewBox="0 0 430 345" fontSize={10}>
      <g stroke="#ddd">
        {[0, 1, 2, 3, 4].map((k) => <line key={k} x1={65.5} x2={145.5} y1={29.5 + k * 40} y2={29.5 + k * 40} />)}
        <line x1={145.5} x2={145.5} y1={29.5} y2={229.5} />
      </g>
      {bars.map(([label, top, teal, purple], i) => (
        <g key={label}>
          <rect x={66 + i * 20} y={29 + top} width={18} height={teal - top} fill={TEAL} />
          <rect x={66 + i * 20} y={29 + teal} width={18} height={purple - teal} fill={PURPLE} />
          <rect x={66 + i * 20} y={29 + purple} width={18} height={200 - purple} fill={YELLOW} />
          <line x1={75.5 + i * 20} x2={75.5 + i * 20} y1={229.5} y2={234.5} stroke="#888" />
          <text transform={`translate(${78.5 + i * 20} 237) rotate(-90)`} textAnchor="end">{label}</text>
        </g>
      ))}
      <path d="M65.5 29V229.5H145.5" fill="none" stroke="#888" />
      {["1.0", "0.8", "0.6", "0.4", "0.2", "0.0"].map((t, k) => (
        <g key={t}>
          <line x1={60.5} x2={65.5} y1={29.5 + k * 40} y2={29.5 + k * 40} stroke="#888" />
          <text x={58.5} y={33 + k * 40} textAnchor="end">{t}</text>
        </g>
      ))}
      <text transform="translate(39 129.5) rotate(-90)" textAnchor="middle" fontSize={11} fontWeight={700}>Count of Records</text>
      <text x={163} y={38} fontSize={11} fontWeight={700}>prop</text>
      {[["1-Turin Ville", TEAL], ["3-Piémont", YELLOW], ["2-Turin Territoire", PURPLE]].map(([t, c], k) => (
        <g key={t}>
          <rect x={164} y={46 + k * 13} width={10} height={10} fill={c} />
          <text x={179} y={54.5 + k * 13}>{t}</text>
        </g>
      ))}
      <circle cx={281} cy={33} r={13.5} fill="#fff" stroke="#e6e6e6" />
      {[275.5, 281, 286.5].map((x) => <circle key={x} cx={x} cy={33} r={1.9} fill="#cfcfcf" />)}
    </svg>
  );
}

function Legend() {
  return (
    <div className="absolute top-[476px] left-[30px] flex h-[15px] items-center font-['Liberation_Sans',sans-serif] text-[10px] leading-none text-[#333]">
      {[["1-Turin Ville", "bg-[#8dd3c7]", "w-[86px]"], ["3-Piémont", "bg-[#ffffb3]", "w-[78px]"], ["2-Turin Territoire", "bg-[#bebada]", "w-[100px]"]].map(([t, c, w], i) => (
        <div key={t} className={`${w} relative flex items-center gap-[5px]`}>
          <span className={`h-[15px] w-[15px] ${c}`} />
          {t}
          {i < 2 && <span className="absolute right-0 bottom-[-2px] text-[7px] leading-none font-bold text-black">,</span>}
        </div>
      ))}
    </div>
  );
}

export default function App() {
  return (
    <div className="flex h-[979px] w-[1832px] overflow-hidden bg-white font-['Lato',sans-serif] text-[#222] [font-variant-ligatures:none]">
      <Sidebar />
      <main className="flex min-w-0 flex-1 flex-col">
        <div className="flex h-[532px] shrink-0 gap-[2px]">
          <div className="relative w-[763px] shrink-0 overflow-hidden border border-t-0 border-black bg-white">
            <NodeLink />
            <Legend />
            <Toolbar />
            <ResizeGrip />
          </div>
          <div className="relative w-[617px] shrink-0 overflow-hidden border border-t-0 border-black bg-white">
            <GeoMap />
            <Toolbar />
            <ResizeGrip />
          </div>
        </div>
        <div className="flex-1 border-x border-[#d4d4d5]">
          <div className="flex h-[43px] text-sm">
            <div className="w-[74px] border-b border-[#d4d4d5] pt-3 pl-5 leading-5">Table</div>
            <div className="w-[101px] rounded-t border-x border-t border-[#d4d4d5] pt-[11px] text-center leading-5 font-bold text-[#121212]">Summary</div>
            <div className="flex-1 border-b border-[#d4d4d5]" />
          </div>
          <div className="flex pt-[11px] pl-[14px]">
            <Measures />
            <div className="w-[27px] shrink-0" />
            <Properties />
            <div className="-ml-[19px] w-[430px] shrink-0 pt-1"><DistributionChart /></div>
          </div>
        </div>
      </main>
    </div>
  );
}
